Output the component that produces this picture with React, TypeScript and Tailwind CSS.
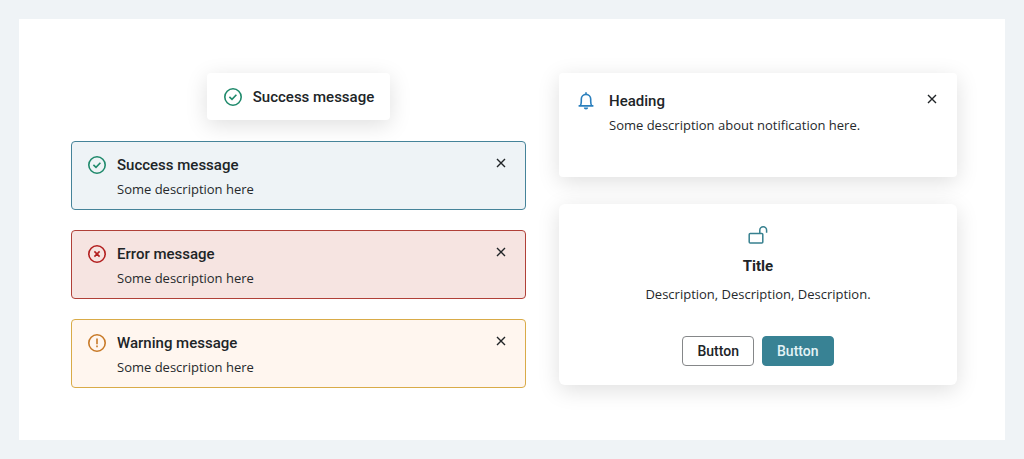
import type { ReactNode } from 'react'

type IconProps = { className?: string }

function CheckCircle({ className = '' }: IconProps) {
  return (
    <svg viewBox="0 0 20 20" className={`size-5 shrink-0 ${className}`} fill="none" stroke="currentColor" strokeWidth="1.6" aria-hidden="true">
      <circle cx="10" cy="10" r="8.2" />
      <path d="M6.4 9.8l2.6 2.5 4.4-4.6" />
    </svg>
  )
}

function CloseCircle({ className = '' }: IconProps) {
  return (
    <svg viewBox="0 0 20 20" className={`size-5 shrink-0 ${className}`} fill="none" stroke="currentColor" strokeWidth="1.6" aria-hidden="true">
      <circle cx="10" cy="10" r="8.2" />
      <path d="M7.4 7.4l5.2 5.2M12.6 7.4l-5.2 5.2" strokeWidth="1.6" />
    </svg>
  )
}

function WarningCircle({ className = '' }: IconProps) {
  return (
    <svg viewBox="0 0 20 20" className={`size-5 shrink-0 ${className}`} fill="none" stroke="currentColor" strokeWidth="1.6" aria-hidden="true">
      <circle cx="10" cy="10" r="8.2" />
      <path d="M10 5.6v5.6M10 12.6v1.7" />
    </svg>
  )
}

function Bell({ className = '' }: IconProps) {
  return (
    <svg viewBox="0 0 20 20" className={`size-5 shrink-0 ${className}`} fill="none" stroke="currentColor" strokeWidth="1.6" aria-hidden="true">
      <path d="M10 1.2v2M4.3 14.6c.8-1.2 1-2.6 1-4.4V8.1a4.7 4.7 0 0 1 9.4 0v2.1c0 1.8.2 3.2 1 4.4M2.6 14.9h14.8" />
      <path d="M7.8 16.6h4.4a2.2 1.9 0 0 1-4.4 0z" fill="currentColor" stroke="none" />
    </svg>
  )
}

function Unlock({ className = '' }: IconProps) {
  return (
    <svg viewBox="0 0 20 20" className={`size-5 shrink-0 ${className}`} fill="none" stroke="currentColor" strokeWidth="1.5" aria-hidden="true">
      <rect x="1.2" y="8.4" width="13.6" height="9.6" rx="1" />
      <path d="M11.8 8.4V5.2a3.4 3.4 0 0 1 6.8 0v2.6" />
    </svg>
  )
}

function CloseButton() {
  return (
    <button type="button" aria-label="Close" className="flex size-5 shrink-0 items-center justify-center text-[#202427]">
      <svg viewBox="0 0 10 10" className="size-[10px]" fill="none" stroke="currentColor" strokeWidth="1.4" aria-hidden="true">
        <path d="M1 1l8 8M9 1L1 9" />
      </svg>
    </button>
  )
}

const titleText = 'text-[15px] leading-6 font-medium'
const bodyText = "font-['Open_Sans',sans-serif] text-[13px] leading-6 text-[#26292c]"
const cardShadow = 'shadow-[0_5px_22px_rgba(0,0,0,0.13)]'

type AlertProps = { icon: ReactNode; title: string; className: string }

function Alert({ icon, title, className }: AlertProps) {
  return (
    <div role="alert" className={`flex gap-[10px] rounded border pt-[11px] pr-[14px] pb-2 pl-[15px] ${className}`}>
      <div className="pt-[2px]">{icon}</div>
      <div className="flex-1">
        <h3 className={titleText}>{title}</h3>
        <p className={bodyText}>Some description here</p>
      </div>
      <CloseButton />
    </div>
  )
}

export default function App() {
  return (
    <div className="min-h-screen bg-[#eff3f6] p-[19px] font-['Roboto',sans-serif] text-[#202427]">
      <main className="grid min-h-[calc(100vh-38px)] grid-cols-[455fr_398fr] items-start gap-[33px] bg-white pt-[54px] pr-12 pb-[52px] pl-[52px]">
        <section className="flex flex-col gap-5">
          {/* Toast */}
          <div role="status" className={`mb-px flex items-center gap-[10px] self-center rounded px-4 pt-3 pb-[11px] ${cardShadow}`}>
            <CheckCircle className="text-[#208a6c]" />
            <span className={titleText}>Success message</span>
          </div>

          <Alert
            title="Success message"
            icon={<CheckCircle className="text-[#208a6c]" />}
            className="border-[#458399] bg-[#eef3f6]"
          />
          <Alert
            title="Error message"
            icon={<CloseCircle className="text-[#b32020]" />}
            className="border-[#b04038] bg-[#f6e4e1]"
          />
          <Alert
            title="Warning message"
            icon={<WarningCircle className="text-[#c87a28]" />}
            className="border-[#d9ab48] bg-[#fff6ef]"
          />
        </section>

        <section className="flex flex-col gap-[27px]">
          {/* Notification */}
          <div className={`flex gap-[13px] rounded pt-4 pr-[15px] pb-10 pl-[17px] ${cardShadow}`}>
            <Bell className="mt-[2px] text-[#2a7fbd]" />
            <div className="flex-1">
              <h3 className={titleText}>Heading</h3>
              <p className={bodyText}>Some description about notification here.</p>
            </div>
            <CloseButton />
          </div>

          {/* Dialog */}
          <div className={`flex flex-col items-center rounded-md px-4 pt-[21px] pb-[19px] text-center ${cardShadow}`}>
            <Unlock className="text-[#37808f]" />
            <h3 className="mt-[9px] text-[15px] leading-6 font-bold">Title</h3>
            <p className={`mt-1 ${bodyText}`}>Description, Description, Description.</p>
            <div className="mt-[30px] flex gap-2">
              <button type="button" className="rounded border border-[#858789] px-[14px] py-1 text-sm leading-5 font-medium">
                Button
              </button>
              <button type="button" className="rounded border border-[#388294] bg-[#388294] px-[14px] py-1 text-sm leading-5 font-medium text-[#e3f3f6]">
                Button
              </button>
            </div>
          </div>
        </section>
      </main>
    </div>
  )
}
